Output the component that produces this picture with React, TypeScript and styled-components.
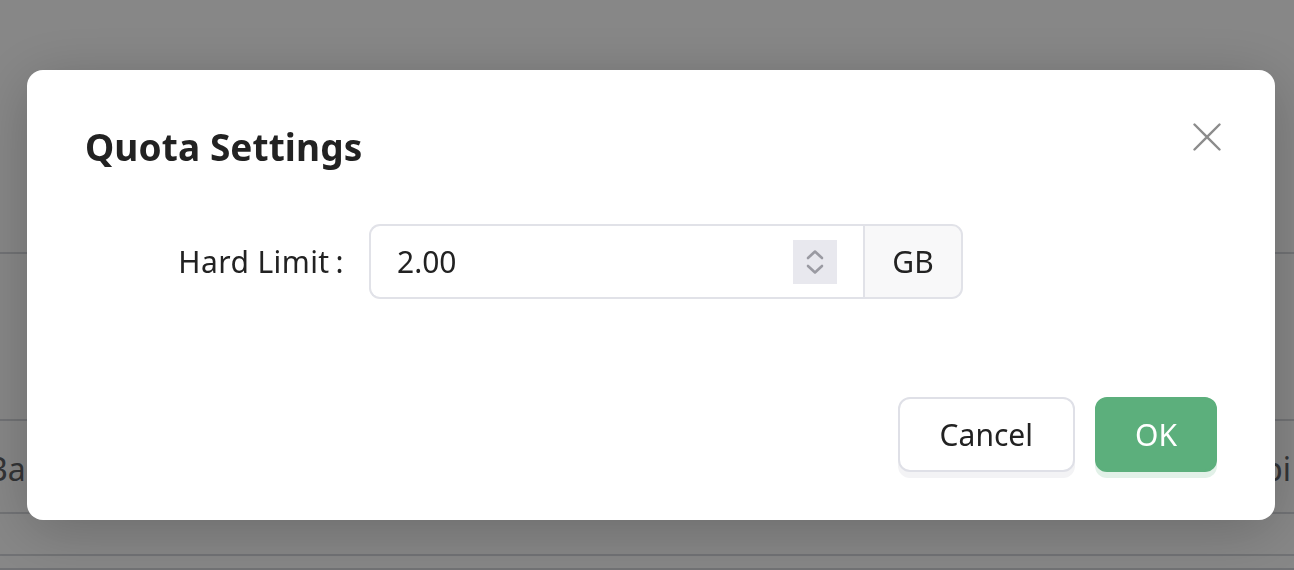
import styled, { createGlobalStyle } from "styled-components";

const GlobalStyle = createGlobalStyle`
  html, body {
    margin: 0;
    padding: 0;
    background: #fff;
    overflow: hidden;
  }
  body {
    font-family: "Noto Sans", "Open Sans", sans-serif;
  }
`;

const CloseIcon = () => (
  <svg width="28" height="28" viewBox="0 0 28 28" fill="none">
    <path
      d="M1.5 1.5 L26.5 26.5 M26.5 1.5 L1.5 26.5"
      stroke="#8c8c8c"
      strokeWidth="2.4"
      strokeLinecap="round"
    />
  </svg>
);

const SpinIcon = () => (
  <svg width="44" height="44" viewBox="0 0 44 44" fill="none">
    <path
      d="M15 18 L22 11.5 L29 18"
      stroke="#9a9aa2"
      strokeWidth="2.6"
      strokeLinecap="round"
      strokeLinejoin="round"
    />
    <path
      d="M15 26 L22 32.5 L29 26"
      stroke="#9a9aa2"
      strokeWidth="2.6"
      strokeLinecap="round"
      strokeLinejoin="round"
    />
  </svg>
);

const App = () => {
  return (
    <>
      <GlobalStyle />
      <Page>
        <TopArea />
        <Row height={167} />
        <Row height={93}>
          <LeftCell>Backup</LeftCell>
          <RightCell>Api</RightCell>
        </Row>
        <Row height={42} />
        <Row height={14} />
      </Page>

      <Overlay>
        <Dialog>
          <Header>
            <Title>Quota Settings</Title>
            <CloseButton aria-label="close">
              <CloseIcon />
            </CloseButton>
          </Header>

          <FormRow>
            <Label>
              Hard Limit<Colon>:</Colon>
            </Label>
            <InputGroup>
              <InputBox>
                <Value>2.00</Value>
                <Spinner>
                  <SpinIcon />
                </Spinner>
              </InputBox>
              <Addon>GB</Addon>
            </InputGroup>
          </FormRow>

          <Footer>
            <Button>Cancel</Button>
            <Button primary>OK</Button>
          </Footer>
        </Dialog>
      </Overlay>
    </>
  );
};

const Page = styled.div`
  width: 1294px;
  height: 570px;
  display: flex;
  flex-direction: column;
  background: #fff;
  overflow: hidden;
`;

const TopArea = styled.div`
  height: 252px;
  border-bottom: 2px solid #d6d8dd;
  flex-shrink: 0;
`;

const Row = styled.div<{ height: number }>`
  height: ${({ height }) => height - 2}px;
  border-bottom: 2px solid #d6d8dd;
  display: flex;
  align-items: center;
  justify-content: space-between;
  flex-shrink: 0;
  font-size: 32px;
  color: #606266;
`;

const LeftCell = styled.div`
  margin-left: -13px;
  padding-top: 4px;
`;

const RightCell = styled.div`
  margin-right: 3px;
  padding-top: 4px;
`;

const Overlay = styled.div`
  position: fixed;
  inset: 0;
  background: rgba(0, 0, 0, 0.47);
  display: flex;
  align-items: flex-start;
  padding: 70px 0 0 27px;
  box-sizing: border-box;
`;

const Dialog = styled.div`
  width: 1248px;
  height: 450px;
  background: #fff;
  border-radius: 16px;
  box-shadow: 0 10px 60px rgba(0, 0, 0, 0.22);
  box-sizing: border-box;
  padding: 53px 54px 0 58px;
  display: flex;
  flex-direction: column;
`;

const Header = styled.div`
  display: flex;
  justify-content: space-between;
  align-items: flex-start;
`;

const Title = styled.h2`
  margin: 2px 0 0;
  font-size: 37px;
  line-height: 1.2;
  font-weight: 700;
  color: #222;
  letter-spacing: 0.1px;
`;

const CloseButton = styled.button`
  border: none;
  background: none;
  padding: 0;
  margin: 0;
  width: 28px;
  height: 28px;
  cursor: pointer;
  display: flex;
`;

const FormRow = styled.div`
  display: flex;
  align-items: center;
  margin-top: 55px;
`;

const Label = styled.label`
  width: 284px;
  box-sizing: border-box;
  padding-right: 25px;
  text-align: right;
  font-size: 30px;
  letter-spacing: 0.4px;
  color: #222;
`;

const Colon = styled.span`
  margin-left: 6px;
`;

const InputGroup = styled.div`
  display: flex;
  height: 75px;
`;

const InputBox = styled.div`
  width: 494px;
  box-sizing: border-box;
  border: 2px solid #e1e2e8;
  border-right: none;
  border-radius: 11px 0 0 11px;
  display: flex;
  align-items: center;
  justify-content: space-between;
  padding: 0 26px 0 26px;
`;

const Value = styled.span`
  font-size: 30px;
  color: #222;
`;

const Spinner = styled.div`
  width: 44px;
  height: 44px;
  background: #e8e8ee;
  display: flex;
`;

const Addon = styled.div`
  width: 100px;
  box-sizing: border-box;
  border: 2px solid #e1e2e8;
  border-radius: 0 11px 11px 0;
  background: #f8f8f9;
  display: flex;
  align-items: center;
  justify-content: center;
  font-size: 30px;
  color: #222;
`;

const Footer = styled.div`
  display: flex;
  justify-content: flex-end;
  gap: 20px;
  margin-top: 98px;
  padding-right: 4px;
`;

const Button = styled.button<{ primary?: boolean }>`
  height: 75px;
  box-sizing: border-box;
  padding: 0 ${({ primary }) => (primary ? "38px" : "40px")};
  font-family: "Noto Sans", "Open Sans", sans-serif;
  font-size: 30px;
  border-radius: 12px;
  cursor: pointer;
  ${({ primary }) =>
    primary
      ? `
    background: #5caf7c;
    color: #fff;
    border: 2px solid #5caf7c;
    box-shadow: 0 6px 0 #e2f1e8;
  `
      : `
    background: #fff;
    color: #222;
    border: 2px solid #dfe0e7;
    box-shadow: 0 6px 0 #f3f3f5;
  `}
`;

export default App;
